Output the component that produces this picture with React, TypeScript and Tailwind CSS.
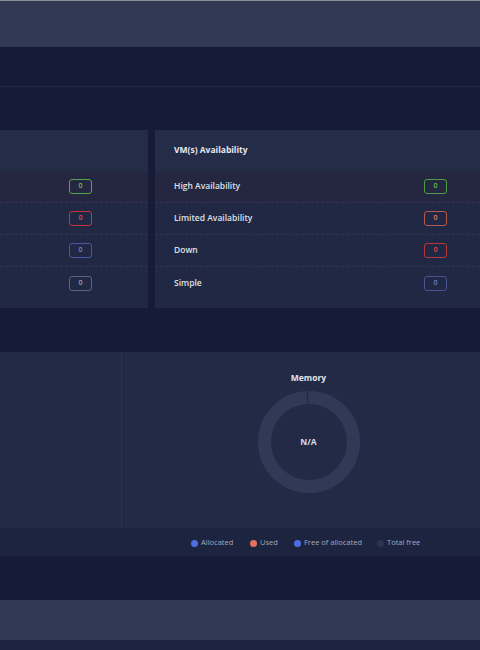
import React from "react";

type Row = { label: string; color: string; text: string };

const leftRows: Row[] = [
  { label: "", color: "border-[#52a847]", text: "text-[#62c457]" },
  { label: "", color: "border-[#c2343a]", text: "text-[#e8454b]" },
  { label: "", color: "border-[#4658a0]", text: "text-[#6f86db]" },
  { label: "", color: "border-[#5c647f]", text: "text-[#9aa1b8]" },
];

const rightRows: Row[] = [
  { label: "High Availability", color: "border-[#4f9a45]", text: "text-[#5fbf55]" },
  { label: "Limited Availability", color: "border-[#b8574d]", text: "text-[#e87763]" },
  { label: "Down", color: "border-[#b8363a]", text: "text-[#e0484c]" },
  { label: "Simple", color: "border-[#46558f]", text: "text-[#6d82cf]" },
];

function Badge({ color, text }: { color: string; text: string }) {
  return (
    <div
      className={`w-[23px] h-[15px] rounded-[3px] border ${color} flex items-center justify-center text-[7px] font-semibold ${text}`}
    >
      0
    </div>
  );
}

function Card({
  title,
  rows,
  className,
  pl,
  pr,
}: {
  title: string;
  rows: Row[];
  className: string;
  pl: string;
  pr: string;
}) {
  return (
    <div className={`${className} bg-[#222a45] flex flex-col`}>
      <div className={`h-[41px] flex items-center ${pl} bg-[#242c48] text-[8.5px] font-bold text-[#e6e8ef]`}>
        {title}
      </div>
      {rows.map((r, i) => (
        <div
          key={i}
          className={`h-[32px] flex items-center justify-between ${pl} ${pr} ${
            i < 3 ? "border-b border-dashed border-[#2f3753]" : ""
          } ${i === 0 ? "bg-[#252741]" : "bg-[#212843]"}`}
        >
          <span className="text-[8.5px] font-semibold text-[#dfe2ea]">{r.label}</span>
          <Badge color={r.color} text={r.text} />
        </div>
      ))}
      <div className="flex-1 bg-[#212843]" />
    </div>
  );
}

function Donut() {
  const r = 44.5;
  const c = 2 * Math.PI * r;
  return (
    <svg width="104" height="104" viewBox="0 0 104 104">
      <circle
        cx="52"
        cy="52"
        r={r}
        fill="none"
        stroke="#313957"
        strokeWidth="13"
        strokeDasharray={`${c - 2} 2`}
        transform="rotate(-91 52 52)"
      />
    </svg>
  );
}

function Legend({ color, label, w }: { color: string; label: string; w: string }) {
  return (
    <div className={`flex items-center gap-[3px] ${w}`}>
      <span className={`w-[7px] h-[7px] rounded-full shrink-0 ${color}`} />
      <span className="text-[7.5px] text-[#a2a8bf] whitespace-nowrap">{label}</span>
    </div>
  );
}

export default function App() {
  return (
    <div
      className="w-[480px] h-[650px] overflow-hidden bg-[#171c36] flex flex-col"
      style={{ fontFamily: '"Open Sans", "Noto Sans", sans-serif' }}
    >
      <div className="h-px bg-[#8d8f98]" />
      <div className="h-[46px] bg-[#323955]" />
      <div className="h-px bg-[#141830]" />
      <div className="h-[38px]" />
      <div className="h-px bg-[#222a46]" />
      <div className="h-[43px]" />
      <div className="h-[178px] flex gap-[7px]">
        <Card title="" rows={leftRows} className="w-[148px]" pl="pl-[10px]" pr="pr-[56px]" />
        <Card
          title="VM(s) Availability"
          rows={rightRows}
          className="flex-1"
          pl="pl-[19px]"
          pr="pr-[33px]"
        />
      </div>
      <div className="h-[44px]" />
      <div className="h-[176px] flex bg-[#222a45]">
        <div className="w-[122px] border-r border-[#2c3450]" />
        <div className="flex-1 flex flex-col items-center pl-[15px] pt-[19px]">
          <div className="text-[8.5px] font-bold text-[#e2e5ec] leading-[14px]">Memory</div>
          <div className="relative mt-[5px]">
            <Donut />
            <div className="absolute inset-0 flex items-center justify-center text-[8.5px] font-bold text-[#d9dce6]">
              N/A
            </div>
          </div>
        </div>
      </div>
      <div className="h-[28px] bg-[#1d2440] flex items-center pl-[191px] pt-[2px]">
        <Legend color="bg-[#4b6fe3]" label="Allocated" w="w-[59px]" />
        <Legend color="bg-[#e2735a]" label="Used" w="w-[44px]" />
        <Legend color="bg-[#4b6fe3]" label="Free of allocated" w="w-[83px]" />
        <Legend color="bg-[#2d3452]" label="Total free" w="w-[60px]" />
      </div>
      <div className="h-[44px]" />
      <div className="h-[40px] bg-[#323955]" />
      <div className="flex-1 bg-[#1d2340]" />
    </div>
  );
}
